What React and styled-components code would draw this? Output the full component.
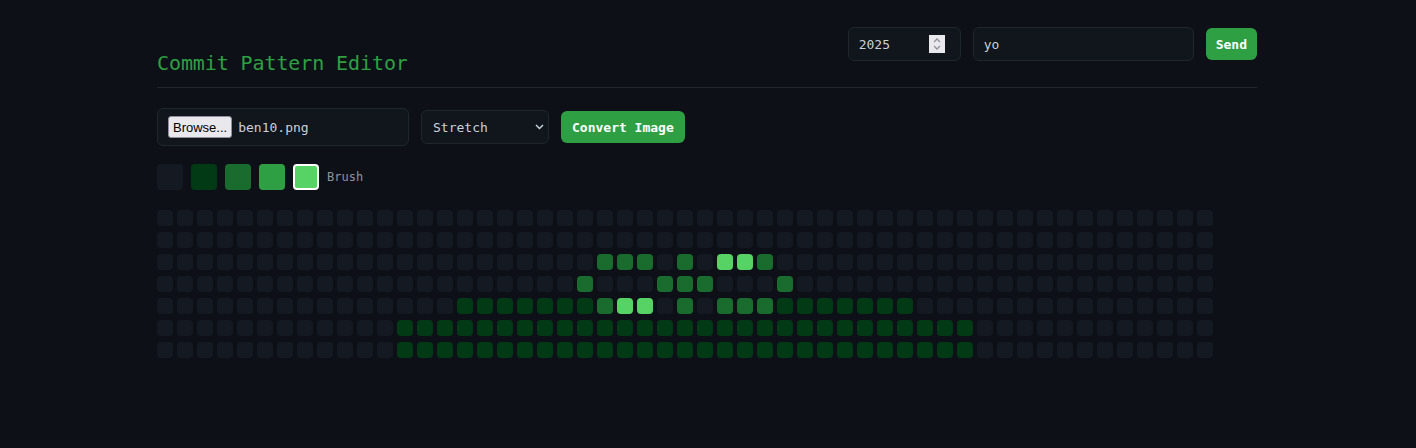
import React, { useState } from 'react';
import styled, { createGlobalStyle } from 'styled-components';

const COLS = 53;
const ROWS = 7;
const LEVELS = ['#151a22', '#033a16', '#196c2e', '#2ea043', '#56d364'];

const range = (a, b) => Array.from({ length: b - a + 1 }, (_, i) => a + i);

// cells painted in the pattern, by row -> [col, level]
const PAINT = {
  2: [[22, 2], [23, 2], [24, 2], [26, 2], [28, 4], [29, 4], [30, 2]],
  3: [[21, 2], [25, 2], [26, 2], [27, 2], [31, 2]],
  4: [
    ...range(15, 21).map(c => [c, 1]),
    [22, 2], [23, 4], [24, 4], [26, 2], [28, 2], [29, 2], [30, 2],
    ...range(31, 37).map(c => [c, 1]),
  ],
  5: range(12, 40).map(c => [c, 1]),
  6: range(12, 40).map(c => [c, 1]),
};

const buildGrid = () => {
  const grid = Array.from({ length: ROWS }, () => Array(COLS).fill(0));
  Object.keys(PAINT).forEach(r => {
    PAINT[r].forEach(([c, lvl]) => {
      grid[r][c] = lvl;
    });
  });
  return grid;
};

const GlobalStyle = createGlobalStyle`
  html, body {
    margin: 0;
    background: #0d1117;
    color: #c9d1d9;
    font-family: "DejaVu Sans Mono", "Liberation Mono", monospace;
  }
`;

const Page = styled.div`
  max-width: 1100px;
  margin: 0 auto;
  padding-top: 27px;
  transform: translateX(-1px);
`;

const Header = styled.header`
  display: flex;
  justify-content: space-between;
  align-items: flex-start;
  padding-bottom: 12px;
  border-bottom: 1px solid #21262d;
`;

const Title = styled.h1`
  margin: 24px 0 0;
  font-size: 20px;
  line-height: 24px;
  font-weight: normal;
  letter-spacing: -0.1px;
  color: #2ea043;
`;

const Controls = styled.div`
  display: flex;
  align-items: center;
  gap: 12px;
`;

const Field = styled.div`
  display: flex;
  align-items: center;
  box-sizing: border-box;
  width: ${({ $w }) => $w}px;
  height: ${({ $h }) => $h || 34}px;
  padding: 0 ${({ $pr }) => ($pr != null ? $pr : 10)}px 0 10px;
  background: #11151c;
  border: 1px solid #21262d;
  border-radius: 6px;
  gap: 6px;
`;

const TextInput = styled.input`
  flex: 1;
  min-width: 0;
  background: transparent;
  border: 0;
  outline: none;
  padding: 0;
  color: #c9d1d9;
  font: 13px "DejaVu Sans Mono", monospace;
`;

const Spinner = styled.div`
  width: 16px;
  height: 18px;
  background: #e9e9ed;
  display: flex;
  align-items: center;
  justify-content: center;
`;

const Button = styled.button`
  height: ${({ $h }) => $h || 32}px;
  padding: 0 ${({ $px }) => $px || 10}px;
  border: 0;
  border-radius: 6px;
  background: #2ea043;
  color: #fff;
  font: bold 13px "DejaVu Sans Mono", monospace;
  cursor: pointer;
`;

const Toolbar = styled.div`
  display: flex;
  align-items: center;
  gap: 12px;
  margin-top: 20px;
`;

const BrowseButton = styled.span`
  display: inline-flex;
  align-items: center;
  height: 20px;
  padding: 0 4px;
  background: #e9e9ed;
  border: 1px solid #8f8f9d;
  border-radius: 3px;
  color: #000;
  font: 13px "Liberation Sans", Arial, sans-serif;
`;

const FileName = styled.span`
  font-size: 13px;
  color: #c9d1d9;
`;

const SelectWrap = styled.div`
  position: relative;
  width: 128px;
  height: 34px;
`;

const Select = styled.select`
  appearance: none;
  width: 100%;
  height: 100%;
  box-sizing: border-box;
  padding: 0 24px 0 11px;
  background: #11151c;
  border: 1px solid #21262d;
  border-radius: 6px;
  color: #c9d1d9;
  font: 13px "DejaVu Sans Mono", monospace;
  outline: none;
`;

const Chevron = styled.svg`
  position: absolute;
  right: 5px;
  top: 14px;
  pointer-events: none;
`;

const Palette = styled.div`
  display: flex;
  align-items: center;
  gap: 8px;
  margin-top: 18px;
`;

const Swatch = styled.div`
  width: 26px;
  height: 26px;
  box-sizing: border-box;
  border-radius: 4px;
  background: ${({ $c }) => $c};
  border: ${({ $active }) => ($active ? '2px solid #fff' : '0')};
  cursor: pointer;
`;

const Label = styled.span`
  font-size: 12px;
  color: #8b949e;
`;

const Grid = styled.div`
  display: grid;
  grid-template-columns: repeat(${COLS}, 16px);
  grid-auto-rows: 16px;
  column-gap: 4px;
  row-gap: 6px;
  margin-top: 20px;
`;

const Cell = styled.div`
  border-radius: 4px;
  background: ${({ $c }) => $c};
`;

export default function App() {
  const [grid, setGrid] = useState(buildGrid);
  const [brush, setBrush] = useState(4);

  const paint = (r, c) => {
    setGrid(g => g.map((row, ri) => (ri === r ? row.map((v, ci) => (ci === c ? brush : v)) : row)));
  };

  return (
    <>
      <GlobalStyle />
      <Page>
        <Header>
          <Title>Commit Pattern Editor</Title>
          <Controls>
            <Field $w={113} $pr={15}>
              <TextInput defaultValue="2025" />
              <Spinner>
                <svg width="10" height="14" viewBox="0 0 10 14" fill="none" stroke="#8f8f9d" strokeWidth="1.3">
                  <path d="M2 5l3-3 3 3" />
                  <path d="M2 9l3 3 3-3" />
                </svg>
              </Spinner>
            </Field>
            <Field $w={221}>
              <TextInput defaultValue="yo" />
            </Field>
            <Button>Send</Button>
          </Controls>
        </Header>

        <Toolbar>
          <Field $w={252} $h={38} $pr={10}>
            <BrowseButton>Browse...</BrowseButton>
            <FileName>ben10.png</FileName>
          </Field>
          <SelectWrap>
            <Select defaultValue="stretch">
              <option value="stretch">Stretch</option>
              <option value="fit">Fit</option>
            </Select>
            <Chevron width="9" height="6" viewBox="0 0 9 6" fill="none" stroke="#c9d1d9" strokeWidth="1.5">
              <path d="M1 1l3.5 3.5L8 1" />
            </Chevron>
          </SelectWrap>
          <Button $px={11}>Convert Image</Button>
        </Toolbar>

        <Palette>
          {LEVELS.map((c, i) => (
            <Swatch key={c} $c={c} $active={brush === i} onClick={() => setBrush(i)} />
          ))}
          <Label>Brush</Label>
        </Palette>

        <Grid>
          {grid.map((row, r) =>
            row.map((lvl, c) => <Cell key={`${r}-${c}`} $c={LEVELS[lvl]} onMouseDown={() => paint(r, c)} />)
          )}
        </Grid>
      </Page>
    </>
  );
}
